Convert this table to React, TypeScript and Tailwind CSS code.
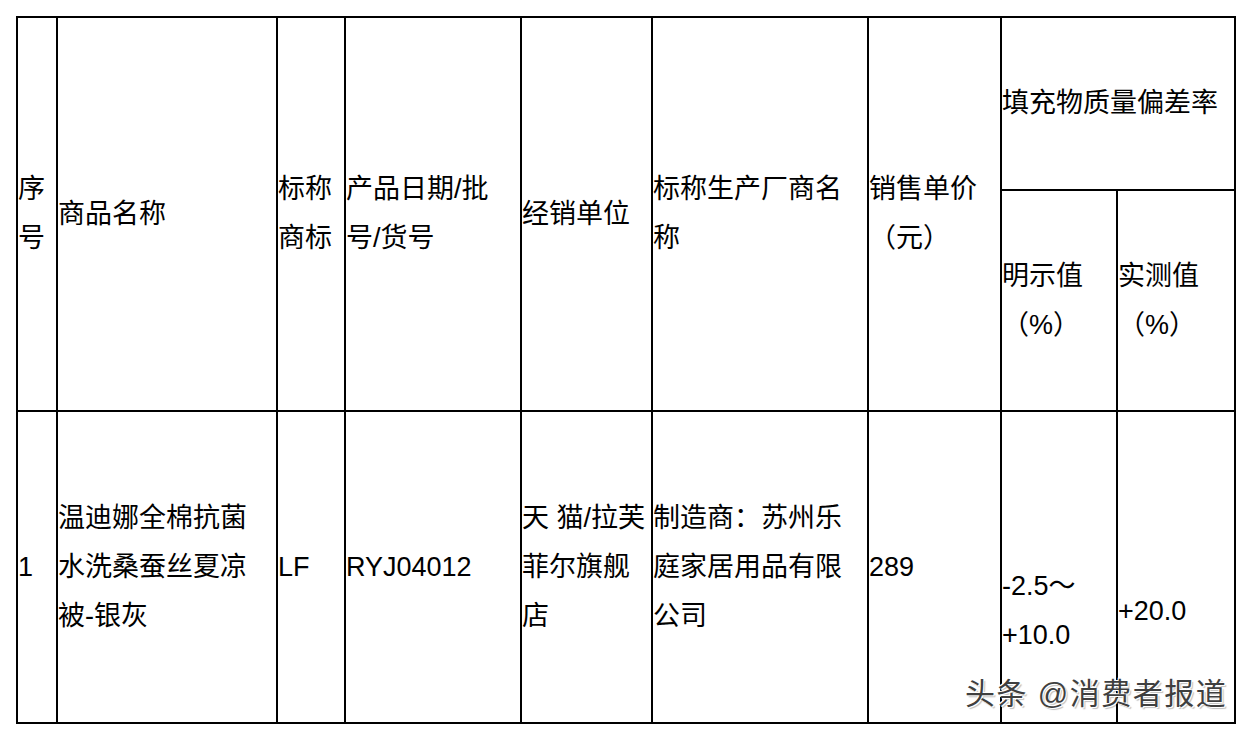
export default function App() {
  const cell = "border-2 border-black p-0 align-middle text-left"
  return (
    <div
      className="relative min-h-screen bg-white p-4 text-[27px] leading-[49px] text-black"
      style={{ fontFamily: '"Liberation Sans", "Noto Sans CJK SC", sans-serif' }}
    >
      <table className="table-fixed border-collapse w-[1218px]">
        <colgroup>
          <col className="w-[40px]" />
          <col className="w-[220px]" />
          <col className="w-[68px]" />
          <col className="w-[176px]" />
          <col className="w-[131px]" />
          <col className="w-[216px]" />
          <col className="w-[133px]" />
          <col className="w-[116px]" />
          <col className="w-[118px]" />
        </colgroup>
        <tbody>
          <tr className="h-[173px]">
            <td rowSpan={2} className={cell}>序<br />号</td>
            <td rowSpan={2} className={cell}>商品名称</td>
            <td rowSpan={2} className={cell}>标称<br />商标</td>
            <td rowSpan={2} className={cell}>产品日期/批<br />号/货号</td>
            <td rowSpan={2} className={cell}>经销单位</td>
            <td rowSpan={2} className={cell}>标称生产厂商名<br />称</td>
            <td rowSpan={2} className={cell}>销售单价<br />（元）</td>
            <td colSpan={2} className={cell}>填充物质量偏差率</td>
          </tr>
          <tr className="h-[221px]">
            <td className={cell}>明示值<br />（%）</td>
            <td className={cell}>实测值<br />（%）</td>
          </tr>
          <tr className="h-[312px]">
            <td className={cell}>1</td>
            <td className={cell}>温迪娜全棉抗菌<br />水洗桑蚕丝夏凉<br />被-银灰</td>
            <td className={cell}>LF</td>
            <td className={cell}>RYJ04012</td>
            <td className={cell}>天 猫/拉芙<br />菲尔旗舰<br />店</td>
            <td className={cell}>制造商：苏州乐<br />庭家居用品有限<br />公司</td>
            <td className={cell}>289</td>
            <td className={`${cell} pt-[88px]`}>-2.5～<br />+10.0</td>
            <td className={`${cell} pt-[88px]`}>+20.0</td>
          </tr>
        </tbody>
      </table>
      <div
        className="absolute left-[965px] top-[676px] text-[30px] leading-[36px] tracking-[1.5px] text-[#3f3f3f] whitespace-nowrap"
        style={{ textShadow: "1px 1px 0 #fff, -1px -1px 0 #fff, 2px 2px 1px rgba(0,0,0,0.25)" }}
      >
        头条 @消费者报道
      </div>
    </div>
  )
}
